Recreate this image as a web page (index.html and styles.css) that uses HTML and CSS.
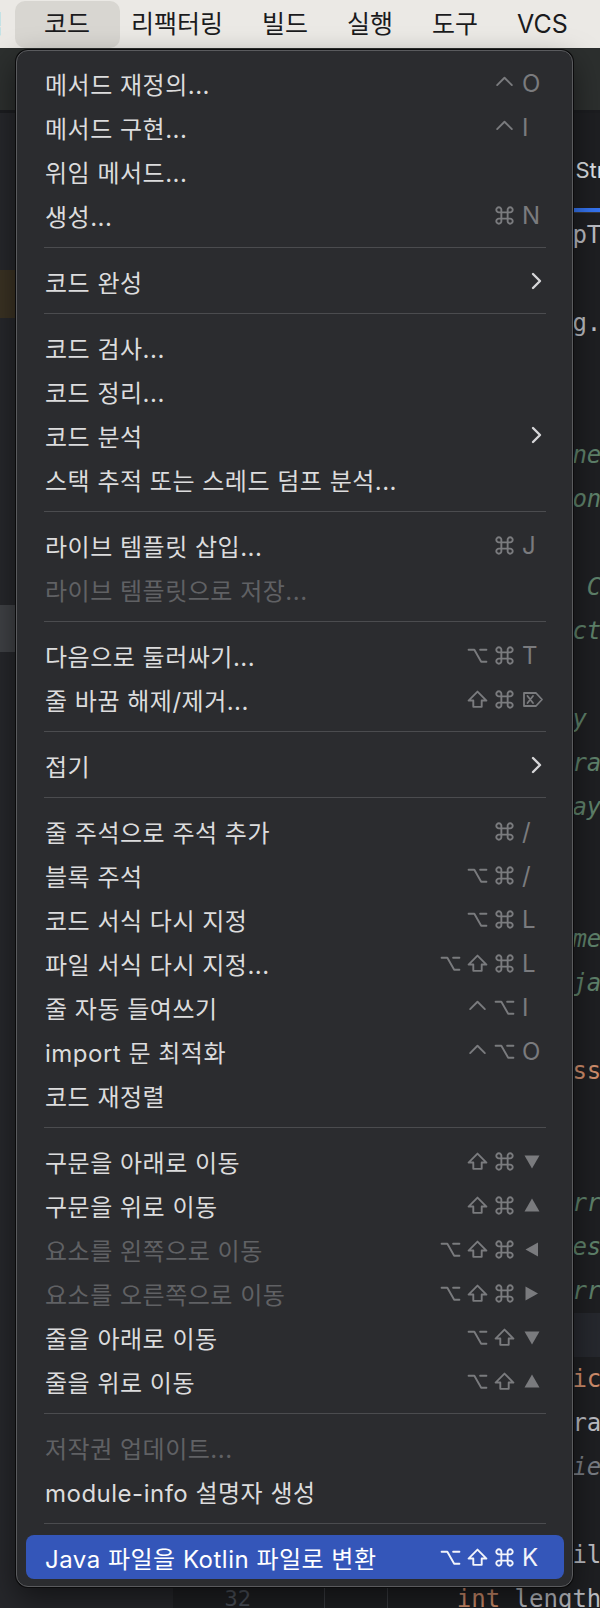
FILE: index.html
```html
<!DOCTYPE html>
<html lang="ko">

<head>
  <meta charset="UTF-8" />
  <meta name="viewport" content="width=device-width, initial-scale=1.0" />
  <title>코드 메뉴</title>
  <link rel="stylesheet" href="styles.css">
</head>

<body>
  <!-- 단축키 기호 -->
  <svg class="defs" width="0" height="0">
    <symbol id="ctrl" viewBox="0 0 20 20"><path d="M3 11.5 L10 4.5 L17 11.5" /></symbol>
    <symbol id="opt" viewBox="0 0 20 20"><path d="M1.5 4.5 H7 L13.5 16 H18.5 M12.5 4.5 H18.5" /></symbol>
    <symbol id="shift" viewBox="0 0 20 20"><path d="M10 2.5 L18.5 11 H14 V17 H6 V11 H1.5 Z" /></symbol>
    <symbol id="cmd" viewBox="0 0 20 20"><path d="M7 7 V4.7 A2.4 2.4 0 1 0 4.7 7 H15.3 A2.4 2.4 0 1 0 13 4.7 V15.3 A2.4 2.4 0 1 0 15.3 13 H4.7 A2.4 2.4 0 1 0 7 15.3 Z" /></symbol>
    <symbol id="del" viewBox="0 0 22 20"><path d="M2 3.5 H14 L20 10 L14 16.5 H2 Z M5.5 6.5 L11 13.5 M11 6.5 L5.5 13.5" /></symbol>
    <symbol id="down" viewBox="0 0 20 20"><path d="M2.5 4 H17.5 L10 17 Z" /></symbol>
    <symbol id="up" viewBox="0 0 20 20"><path d="M10 3 L17.5 16 H2.5 Z" /></symbol>
    <symbol id="left" viewBox="0 0 20 20"><path d="M16 3 V17 L3.5 10 Z" /></symbol>
    <symbol id="right" viewBox="0 0 20 20"><path d="M3.5 3 V17 L16 10 Z" /></symbol>
  </svg>

  <!-- 상단 메뉴 막대 -->
  <div class="menubar">
    <span class="mb-item mb-cut">탐색</span>
    <span class="mb-item mb-active">코드</span>
    <span class="mb-item">리팩터링</span>
    <span class="mb-item">빌드</span>
    <span class="mb-item">실행</span>
    <span class="mb-item">도구</span>
    <span class="mb-item">VCS</span>
  </div>

  <!-- 메뉴 뒤의 IDE 화면 -->
  <div class="ide">
    <div class="toolbar"></div>
    <div class="workspace">
      <div class="project">
        <div class="tree-row">demo</div>
        <div class="tree-row">src</div>
        <div class="tree-row">main</div>
        <div class="tree-row found">java</div>
        <div class="tree-row">com.npTools</div>
        <div class="tree-row">Main</div>
        <div class="tree-row">Util</div>
        <div class="tree-row">resources</div>
        <div class="tree-row">test</div>
        <div class="tree-row">sort</div>
        <div class="tree-row sel">StringSorter</div>
        <div class="tree-row">pom.xml</div>
      </div>
      <div class="editor">
        <div class="tabs">
          <span class="tab"><i class="ficon"></i>Main.java</span>
          <span class="tab"><i class="ficon"></i>Util.java</span>
          <span class="tab tab-active"><i class="ficon"></i>StringSorter.java</span>
        </div>
        <div class="editor-body">
          <div class="gutter">
            <div>1</div><div>2</div><div>3</div><div>4</div><div>5</div><div>6</div><div>7</div><div>8</div>
            <div>9</div><div>10</div><div>11</div><div>12</div><div>13</div><div>14</div><div>15</div><div>16</div>
            <div>17</div><div>18</div><div>19</div><div>20</div><div>21</div><div>22</div><div>23</div><div>24</div>
            <div>25</div><div>26</div><div>27</div><div>28</div><div>29</div><div>30</div><div>31</div><div>32</div>
          </div>
          <div class="fold"></div>
          <div class="code">
            <div class="ln"><span class="kw">import</span> com.npTools.Util;</div>
            <div class="ln"></div>
            <div class="ln"><span class="kw">import</span> edu.ug.Input;</div>
            <div class="ln"></div>
            <div class="ln doc">/**</div>
            <div class="ln doc"> * Computes net sorted values.</div>
            <div class="ln doc"> * Check it on each element.</div>
            <div class="ln doc"> *</div>
            <div class="ln doc"> * Use case: Counts items.</div>
            <div class="ln doc"> * It is exactly the same.</div>
            <div class="ln doc"> *</div>
            <div class="ln doc"> * Returns by Copy of array.</div>
            <div class="ln doc"> * @param array the input.</div>
            <div class="ln doc"> * Given array is sorted.</div>
            <div class="ln doc"> *</div>
            <div class="ln doc"> *</div>
            <div class="ln doc"> * Method name sort.</div>
            <div class="ln doc"> * @version java 17</div>
            <div class="ln doc"> */</div>
            <div class="ln"><span class="kw">abstract class</span> Sorter {</div>
            <div class="ln"></div>
            <div class="ln doc">    /**</div>
            <div class="ln doc">     * The arr value.</div>
            <div class="ln doc">     * It uses merge.</div>
            <div class="ln doc">     * Use arr copy.</div>
            <div class="ln doc cur">     */</div>
            <div class="ln">        <span class="kw">public static</span> String[] sort() {</div>
            <div class="ln">    <span class="kw">int</span>[] array = arr.clone();</div>
            <div class="ln note">    // modified copy</div>
            <div class="ln"></div>
            <div class="ln">    StringBuilder sb = <span class="kw">new</span> StringBuilder();</div>
            <div class="ln">    <span class="kw">int</span> length = arr.length;</div>
          </div>
        </div>
      </div>
    </div>
  </div>

  <!-- 코드 드롭다운 메뉴 -->
  <div class="menu">
    <div class="item"><span class="label">메서드 재정의...</span><span class="sc"><svg class="g"><use href="#ctrl" /></svg><span class="k">O</span></span></div>
    <div class="item"><span class="label">메서드 구현...</span><span class="sc"><svg class="g"><use href="#ctrl" /></svg><span class="k">I</span></span></div>
    <div class="item"><span class="label">위임 메서드...</span></div>
    <div class="item"><span class="label">생성...</span><span class="sc"><svg class="g"><use href="#cmd" /></svg><span class="k">N</span></span></div>
    <div class="sep"></div>
    <div class="item"><span class="label">코드 완성</span><svg class="chev" viewBox="0 0 11 18"><polyline points="2,2 9,9 2,16" /></svg></div>
    <div class="sep"></div>
    <div class="item"><span class="label">코드 검사...</span></div>
    <div class="item"><span class="label">코드 정리...</span></div>
    <div class="item"><span class="label">코드 분석</span><svg class="chev" viewBox="0 0 11 18"><polyline points="2,2 9,9 2,16" /></svg></div>
    <div class="item"><span class="label">스택 추적 또는 스레드 덤프 분석...</span></div>
    <div class="sep"></div>
    <div class="item"><span class="label">라이브 템플릿 삽입...</span><span class="sc"><svg class="g"><use href="#cmd" /></svg><span class="k">J</span></span></div>
    <div class="item off"><span class="label">라이브 템플릿으로 저장...</span></div>
    <div class="sep"></div>
    <div class="item"><span class="label">다음으로 둘러싸기...</span><span class="sc"><svg class="g"><use href="#opt" /></svg><svg class="g"><use href="#cmd" /></svg><span class="k">T</span></span></div>
    <div class="item"><span class="label">줄 바꿈 해제/제거...</span><span class="sc"><svg class="g"><use href="#shift" /></svg><svg class="g"><use href="#cmd" /></svg><svg class="g key del"><use href="#del" /></svg></span></div>
    <div class="sep"></div>
    <div class="item"><span class="label">접기</span><svg class="chev" viewBox="0 0 11 18"><polyline points="2,2 9,9 2,16" /></svg></div>
    <div class="sep"></div>
    <div class="item"><span class="label">줄 주석으로 주석 추가</span><span class="sc"><svg class="g"><use href="#cmd" /></svg><span class="k">/</span></span></div>
    <div class="item"><span class="label">블록 주석</span><span class="sc"><svg class="g"><use href="#opt" /></svg><svg class="g"><use href="#cmd" /></svg><span class="k">/</span></span></div>
    <div class="item"><span class="label">코드 서식 다시 지정</span><span class="sc"><svg class="g"><use href="#opt" /></svg><svg class="g"><use href="#cmd" /></svg><span class="k">L</span></span></div>
    <div class="item"><span class="label">파일 서식 다시 지정...</span><span class="sc"><svg class="g"><use href="#opt" /></svg><svg class="g"><use href="#shift" /></svg><svg class="g"><use href="#cmd" /></svg><span class="k">L</span></span></div>
    <div class="item"><span class="label">줄 자동 들여쓰기</span><span class="sc"><svg class="g"><use href="#ctrl" /></svg><svg class="g"><use href="#opt" /></svg><span class="k">I</span></span></div>
    <div class="item"><span class="label">import 문 최적화</span><span class="sc"><svg class="g"><use href="#ctrl" /></svg><svg class="g"><use href="#opt" /></svg><span class="k">O</span></span></div>
    <div class="item"><span class="label">코드 재정렬</span></div>
    <div class="sep"></div>
    <div class="item"><span class="label">구문을 아래로 이동</span><span class="sc"><svg class="g"><use href="#shift" /></svg><svg class="g"><use href="#cmd" /></svg><svg class="g key tri"><use href="#down" /></svg></span></div>
    <div class="item"><span class="label">구문을 위로 이동</span><span class="sc"><svg class="g"><use href="#shift" /></svg><svg class="g"><use href="#cmd" /></svg><svg class="g key tri"><use href="#up" /></svg></span></div>
    <div class="item off"><span class="label">요소를 왼쪽으로 이동</span><span class="sc"><svg class="g"><use href="#opt" /></svg><svg class="g"><use href="#shift" /></svg><svg class="g"><use href="#cmd" /></svg><svg class="g key tri"><use href="#left" /></svg></span></div>
    <div class="item off"><span class="label">요소를 오른쪽으로 이동</span><span class="sc"><svg class="g"><use href="#opt" /></svg><svg class="g"><use href="#shift" /></svg><svg class="g"><use href="#cmd" /></svg><svg class="g key tri"><use href="#right" /></svg></span></div>
    <div class="item"><span class="label">줄을 아래로 이동</span><span class="sc"><svg class="g"><use href="#opt" /></svg><svg class="g"><use href="#shift" /></svg><svg class="g key tri"><use href="#down" /></svg></span></div>
    <div class="item"><span class="label">줄을 위로 이동</span><span class="sc"><svg class="g"><use href="#opt" /></svg><svg class="g"><use href="#shift" /></svg><svg class="g key tri"><use href="#up" /></svg></span></div>
    <div class="sep"></div>
    <div class="item off"><span class="label">저작권 업데이트...</span></div>
    <div class="item"><span class="label">module-info 설명자 생성</span></div>
    <div class="sep"></div>
    <div class="item on"><span class="label">Java 파일을 Kotlin 파일로 변환</span><span class="sc"><svg class="g"><use href="#opt" /></svg><svg class="g"><use href="#shift" /></svg><svg class="g"><use href="#cmd" /></svg><span class="k">K</span></span></div>
  </div>
</body>

</html>
```

FILE: styles.css
```css
* {
  margin: 0;
  padding: 0;
  box-sizing: border-box;
}

body {
  width: 600px;
  height: 1608px;
  overflow: hidden;
  position: relative;
  background: #1e1f22;
  font-family: "Inter", "Noto Sans CJK KR", sans-serif;
}

.defs {
  position: absolute;
}

/* 메뉴 막대 */
.menubar {
  height: 48px;
  display: flex;
  align-items: center;
  background: #ebe9e5;
  color: #1b1b1d;
  font-size: 25px;
  white-space: nowrap;
}

.mb-item {
  padding: 0 19.5px;
  line-height: 47px;
}

.mb-cut {
  padding-right: 25.5px;
  margin-left: -63px;
}

.mb-active {
  padding: 0 30px 0 29.5px;
  margin: 0 -8.5px 0 -13.5px;
  background: #d8d6d1;
  border-radius: 10px;
}

/* IDE 배경 */
.ide {
  height: 1560px;
  display: flex;
  flex-direction: column;
  overflow: hidden;
}

.toolbar {
  flex: none;
  height: 65px;
  background: #2c2f2e;
  border-bottom: 3px solid #1c1d20;
}

.workspace {
  flex: 1;
  min-height: 0;
  display: flex;
}

.project {
  width: 174px;
  padding-top: 13.6px;
  background: #26272b;
  border-right: 1px solid #1e1f22;
  color: #dfe1e5;
  font-size: 20px;
}

.tree-row {
  height: 47.8px;
  line-height: 47.8px;
  padding-left: 40px;
  white-space: nowrap;
  overflow: hidden;
}

.tree-row.found {
  background: #3a3223;
}

.tree-row.sel {
  background: #3f4145;
}

.editor {
  flex: 1;
  min-width: 0;
  display: flex;
  flex-direction: column;
}

.tabs {
  flex: none;
  height: 100px;
  display: flex;
  border-bottom: 1px solid #393b40;
  background: #1e1f22;
  white-space: nowrap;
}

.tab {
  display: flex;
  align-items: center;
  padding: 14px 26px 0;
  font-size: 22px;
  color: #dfe1e5;
}

.ficon {
  width: 20px;
  height: 20px;
  margin-right: 10px;
  border-radius: 50%;
  background: #548af7;
}

.tab-active {
  box-shadow: inset 0 -4px #3574f0;
}

.editor-body {
  flex: 1;
  min-height: 0;
  display: flex;
}

.gutter {
  width: 151px;
  padding-right: 73px;
  border-right: 1px solid #393b40;
  text-align: right;
  color: #4b5059;
  font: 22px/44px "DejaVu Sans Mono", monospace;
}

.fold {
  width: 63px;
  border-right: 1px solid #393b40;
}

.code {
  flex: 1;
  padding-left: 11px;
  color: #bcbec4;
  font: 24px/44px "DejaVu Sans Mono", monospace;
  overflow: hidden;
}

.ln {
  height: 44px;
  white-space: pre;
}

.ln.cur {
  background: #26282e;
}

.kw {
  color: #cf8e6d;
}

.doc {
  color: #5f826b;
  font-style: italic;
}

.note {
  color: #7a7e85;
  font-style: italic;
}

/* 드롭다운 메뉴 */
.menu {
  position: absolute;
  left: 16px;
  top: 50px;
  width: 557px;
  padding: 10px 8px 7px 9px;
  background: #2b2c2f;
  border: 1px solid #5a5b5e;
  border-radius: 12px;
  box-shadow: 0 0 0 1px #0b0b0c, 0 12px 30px rgba(0, 0, 0, 0.5);
  color: #dcdcdd;
  font-size: 24px;
  letter-spacing: 0.5px;
}

.item {
  height: 44px;
  display: flex;
  align-items: center;
  padding: 0 22px 0 19px;
  border-radius: 8px;
  white-space: nowrap;
}

.label {
  flex: 1;
}

.item.off {
  color: #606164;
}

.item.on {
  background: #3456b9;
  color: #fff;
}

.sep {
  height: 1px;
  margin: 10px 18px 11px;
  background: #4b4c4f;
}

.sc {
  display: flex;
  align-items: center;
  color: #7a7b7e;
}

.item.on .sc {
  color: #f2f4fa;
}

.g {
  width: 21px;
  height: 21px;
  margin-left: 6px;
  fill: none;
  stroke: currentColor;
  stroke-width: 1.8;
  stroke-linejoin: round;
  stroke-linecap: round;
}

.g.key {
  width: 20px;
  margin-left: 7px;
}

.g.del {
  width: 22px;
  margin-right: -2px;
}

.g.tri {
  fill: currentColor;
  stroke: none;
}

.k {
  width: 20px;
  margin-left: 7px;
}

.chev {
  width: 11px;
  height: 18px;
  fill: none;
  stroke: #d6d6d8;
  stroke-width: 2.4;
  stroke-linecap: round;
  stroke-linejoin: round;
}
```
